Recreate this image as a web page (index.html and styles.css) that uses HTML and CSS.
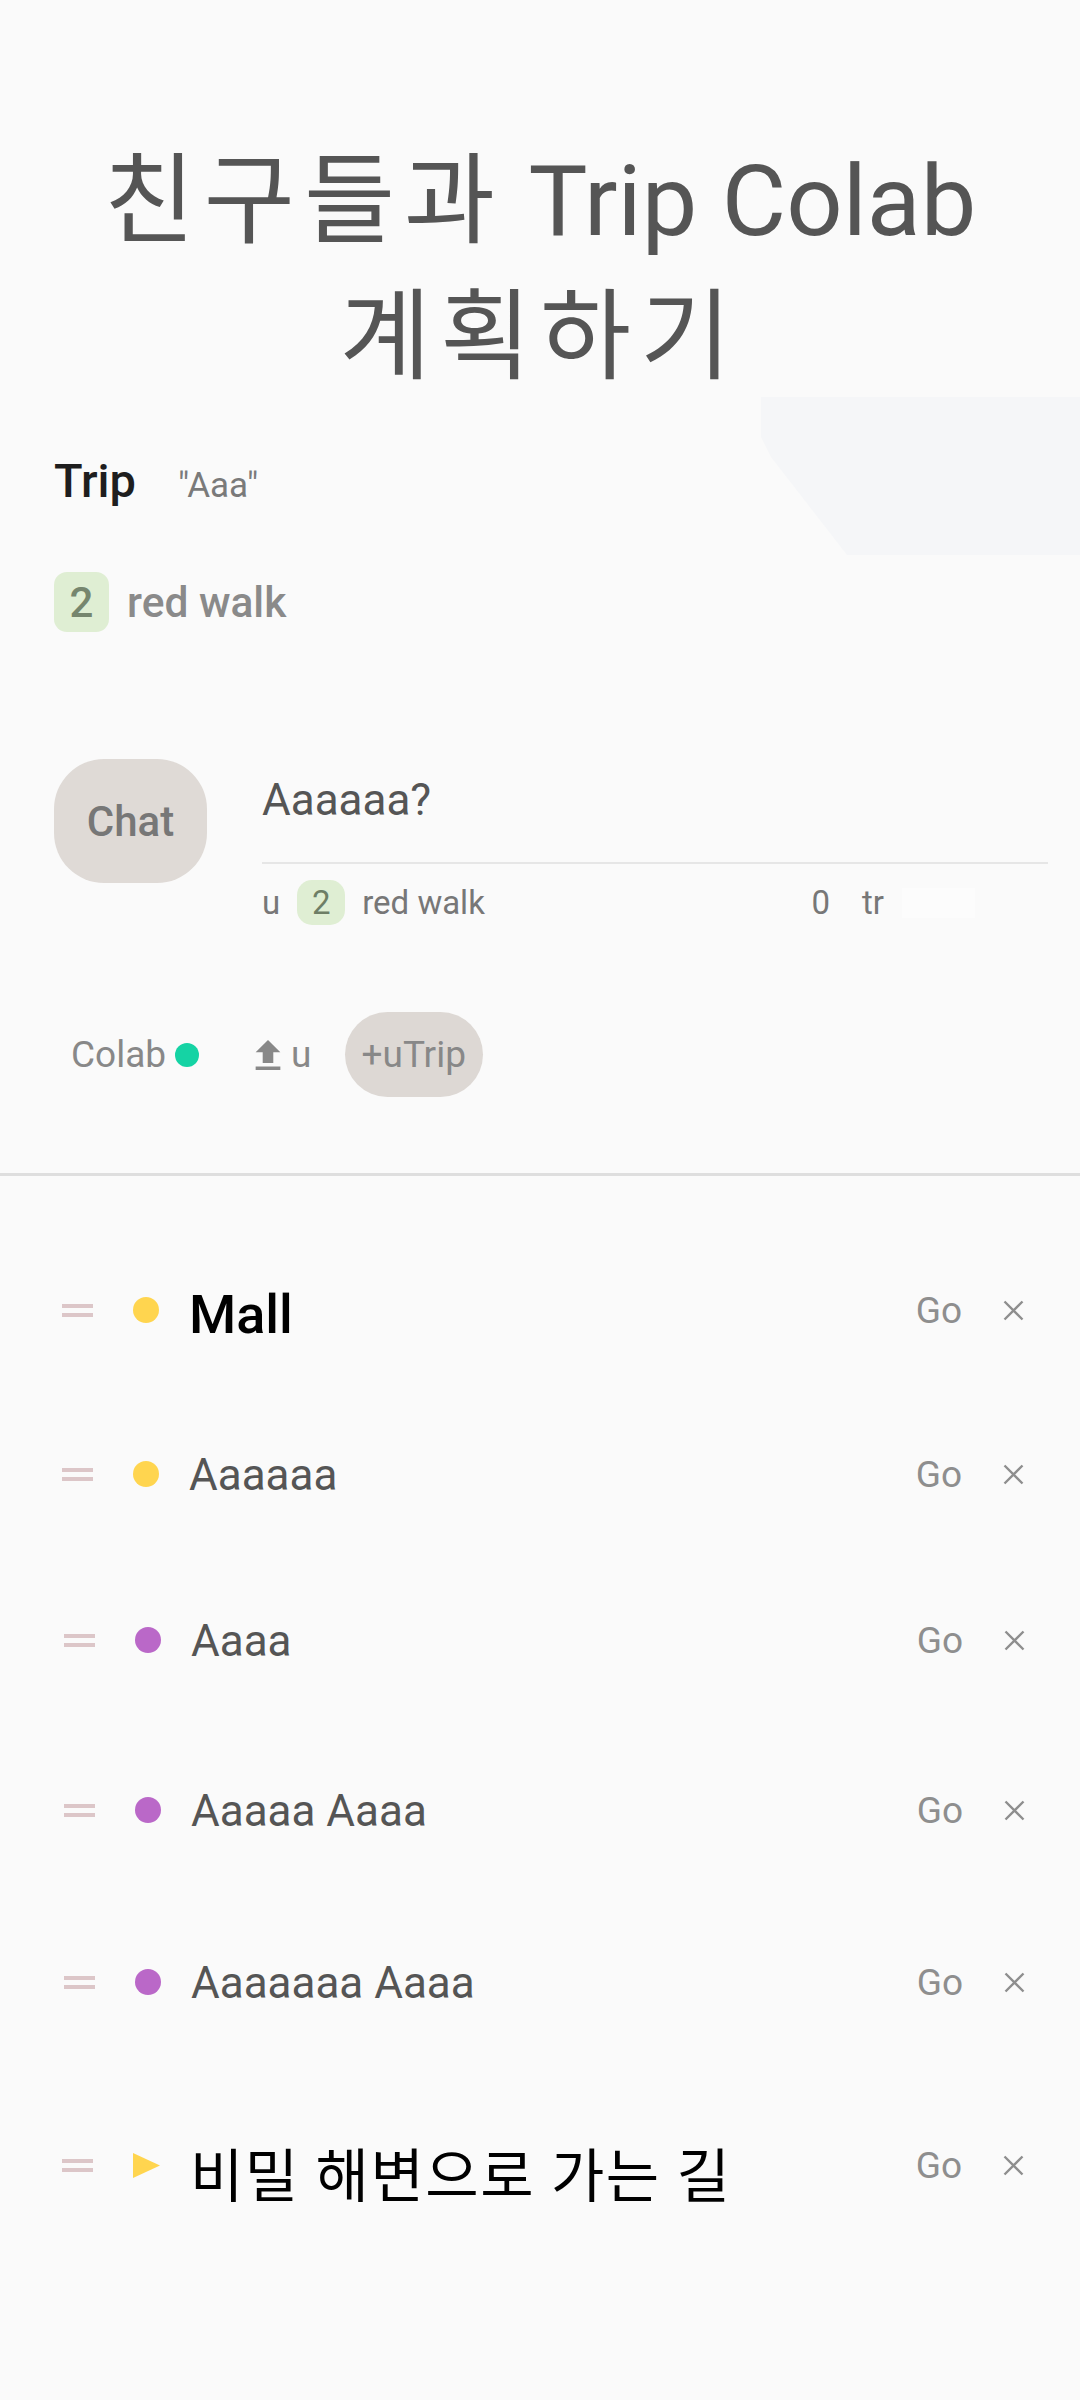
FILE: index.html
```html
<!DOCTYPE html>
<html lang="ko">
<head>
<meta charset="utf-8">
<title>Trip Colab</title>
<link rel="stylesheet" href="styles.css">
</head>
<body>
<div class="page">
  <div class="ghost-shape"></div>
  <h1 class="title"><span class="ko">친구들과</span> Trip Colab <span class="ko">계획하기</span></h1>

  <div class="trip-row">
    <span class="trip-label">Trip</span>
    <span class="trip-quote">"Aaa"</span>
  </div>

  <div class="walk-row">
    <span class="badge">2</span>
    <span class="walk">red walk</span>
  </div>

  <section class="chat">
    <div class="chat-btn">Chat</div>
    <div class="chat-body">
      <div class="input">Aaaaaa?</div>
      <div class="meta">
        <span>u</span>
        <span class="badge badge-sm">2</span>
        <span>red walk</span>
        <div class="meta-right">
          <span>0</span>
          <span>tr</span>
          <span class="ghost-box"></span>
        </div>
      </div>
    </div>
  </section>

  <div class="actions">
    <span class="colab">Colab</span>
    <span class="status-dot"></span>
    <svg class="upload" viewBox="5 3 14 17" aria-hidden="true"><path d="M9 16h6v-6h4l-7-7-7 7h4zm-4 2h14v2H5z"/></svg>
    <span class="upload-label">u</span>
    <span class="chip">+uTrip</span>
  </div>

  <div class="divider"></div>

  <ul class="list">
    <li class="row row-a">
      <span class="handle"></span>
      <span class="dot dot-yellow"></span>
      <span class="name name-strong">Mall</span>
      <span class="go">Go</span>
      <svg class="close" viewBox="0 0 21 21" aria-hidden="true"><path d="M1.5 1.5l18 18M19.5 1.5l-18 18"/></svg>
    </li>
    <li class="row row-a">
      <span class="handle"></span>
      <span class="dot dot-yellow"></span>
      <span class="name">Aaaaaa</span>
      <span class="go">Go</span>
      <svg class="close" viewBox="0 0 21 21" aria-hidden="true"><path d="M1.5 1.5l18 18M19.5 1.5l-18 18"/></svg>
    </li>
    <li class="row row-b">
      <span class="handle"></span>
      <span class="dot dot-purple"></span>
      <span class="name">Aaaa</span>
      <span class="go">Go</span>
      <svg class="close" viewBox="0 0 21 21" aria-hidden="true"><path d="M1.5 1.5l18 18M19.5 1.5l-18 18"/></svg>
    </li>
    <li class="row row-c">
      <span class="handle"></span>
      <span class="dot dot-purple"></span>
      <span class="name">Aaaaa Aaaa</span>
      <span class="go">Go</span>
      <svg class="close" viewBox="0 0 21 21" aria-hidden="true"><path d="M1.5 1.5l18 18M19.5 1.5l-18 18"/></svg>
    </li>
    <li class="row row-c">
      <span class="handle"></span>
      <span class="dot dot-purple"></span>
      <span class="name">Aaaaaaa Aaaa</span>
      <span class="go">Go</span>
      <svg class="close" viewBox="0 0 21 21" aria-hidden="true"><path d="M1.5 1.5l18 18M19.5 1.5l-18 18"/></svg>
    </li>
    <li class="row row-d">
      <span class="handle"></span>
      <svg class="play" viewBox="0 0 27 25" aria-hidden="true"><path d="M0 0L27 12.5L0 25z"/></svg>
      <span class="name name-ko">비밀 해변으로 가는 길</span>
      <span class="go">Go</span>
      <svg class="close" viewBox="0 0 21 21" aria-hidden="true"><path d="M1.5 1.5l18 18M19.5 1.5l-18 18"/></svg>
    </li>
  </ul>
</div>
</body>
</html>
```

FILE: styles.css
```css
* { box-sizing: border-box; }

html, body {
  margin: 0;
  padding: 0;
  background: #fafafa;
}

body {
  font-family: Roboto, "Noto Sans CJK KR", sans-serif;
  color: #555;
}

.page {
  position: relative;
  width: 1080px;
  min-height: 2400px;
  padding-top: 133px;
}

.ghost-shape {
  position: absolute;
  top: 397px;
  left: 761px;
  width: 319px;
  height: 158px;
  background: #f5f6f8;
  clip-path: polygon(0 0, 100% 0, 100% 100%, 86px 100%, 10px 60px, 0 40px);
}

.title {
  position: relative;
  margin: 0;
  padding: 0 40px;
  font-size: 99px;
  line-height: 136px;
  font-weight: 400;
  text-align: center;
  color: #555;
  word-break: keep-all;
}

.title .ko {
  letter-spacing: 9px;
}

.trip-row {
  position: relative;
  display: flex;
  align-items: baseline;
  gap: 42px;
  margin-top: 48px;
  padding-left: 54px;
  height: 56px;
  line-height: 56px;
}

.trip-label {
  font-size: 47px;
  font-weight: 500;
  color: #1e1e1e;
}

.trip-quote {
  font-size: 35px;
  color: #7a7a7a;
}

.walk-row {
  display: flex;
  align-items: center;
  gap: 18px;
  margin-top: 63px;
  padding-left: 54px;
  height: 60px;
}

.badge {
  display: flex;
  align-items: center;
  justify-content: center;
  width: 55px;
  height: 60px;
  border-radius: 13px;
  background: #dfeed3;
  color: #76866e;
  font-size: 42px;
  font-weight: 500;
}

.walk {
  font-size: 42.5px;
  font-weight: 500;
  color: #8a8a8a;
}

.chat {
  display: flex;
  align-items: flex-start;
  gap: 55px;
  margin-top: 127px;
  padding: 0 32px 0 54px;
}

.chat-btn {
  flex: none;
  display: flex;
  align-items: center;
  justify-content: center;
  width: 153px;
  height: 124px;
  border-radius: 50px;
  background: #dfdad6;
  color: #777;
  font-size: 42px;
  font-weight: 500;
}

.chat-body {
  flex: 1;
}

.input {
  padding: 15px 0 36px;
  font-size: 44px;
  line-height: 52px;
  color: #555;
  border-bottom: 2px solid #e6e6e6;
}

.meta {
  display: flex;
  align-items: center;
  gap: 17px;
  margin-top: 16px;
  height: 45px;
  font-size: 33px;
  color: #777;
}

.badge-sm {
  width: 48px;
  height: 45px;
  border-radius: 15px;
  font-size: 33px;
  font-weight: 400;
  color: #6e7e66;
}

.meta-right {
  display: flex;
  align-items: center;
  gap: 32px;
  margin-left: auto;
  margin-right: 73px;
}

.ghost-box {
  width: 73px;
  height: 30px;
  margin-left: -14px;
  background: #fcfcfc;
}

.actions {
  display: flex;
  align-items: center;
  margin-top: 87px;
  padding-left: 71px;
  height: 85px;
  font-size: 37px;
  color: #888;
}

.status-dot {
  width: 24px;
  height: 24px;
  margin-left: 9px;
  border-radius: 50%;
  background: #15d3a4;
}

.upload {
  width: 26px;
  height: 30px;
  margin-left: 56px;
  fill: #888;
}

.upload-label {
  margin-left: 10px;
}

.chip {
  display: flex;
  align-items: center;
  height: 85px;
  margin-left: 33px;
  padding: 0 17px;
  border-radius: 43px;
  background: #ddd8d4;
  color: #888;
}

.divider {
  margin-top: 76px;
  height: 3px;
  background: #dedede;
}

.list {
  list-style: none;
  margin: 0;
  padding: 52px 0 0;
}

.row {
  display: flex;
  align-items: center;
  padding: 0 56px 0 62px;
}

.row-a { height: 164px; }
.row-b { height: 168px; }
.row-c { height: 172px; }
.row-d { height: 194px; }

.row-b, .row-c { padding-left: 64px; padding-right: 55px; }

.handle {
  flex: none;
  width: 31px;
  height: 13px;
  border-top: 4px solid #dcc6c8;
  border-bottom: 4px solid #dcc6c8;
}

.dot {
  flex: none;
  width: 26px;
  height: 26px;
  margin-left: 40px;
  border-radius: 50%;
}

.dot-yellow { background: #ffd54f; }
.dot-purple { background: #ba68c8; }

.play {
  flex: none;
  width: 27px;
  height: 25px;
  margin-left: 40px;
  fill: #ffd54f;
}

.name {
  flex: 1;
  margin-left: 30px;
  padding-top: 2px;
  font-size: 44px;
  color: #555;
  white-space: nowrap;
}

.name-strong {
  padding-top: 8px;
  font-size: 54px;
  font-weight: 500;
  color: #000;
}

.name-ko {
  padding-top: 14px;
  font-size: 58px;
  letter-spacing: 1.5px;
  color: #000;
}

.go {
  font-size: 37px;
  color: #8e8e8e;
}

.close {
  flex: none;
  width: 21px;
  height: 21px;
  margin-left: 41px;
  stroke: #8e8e8e;
  stroke-width: 2.4;
  fill: none;
}
```
